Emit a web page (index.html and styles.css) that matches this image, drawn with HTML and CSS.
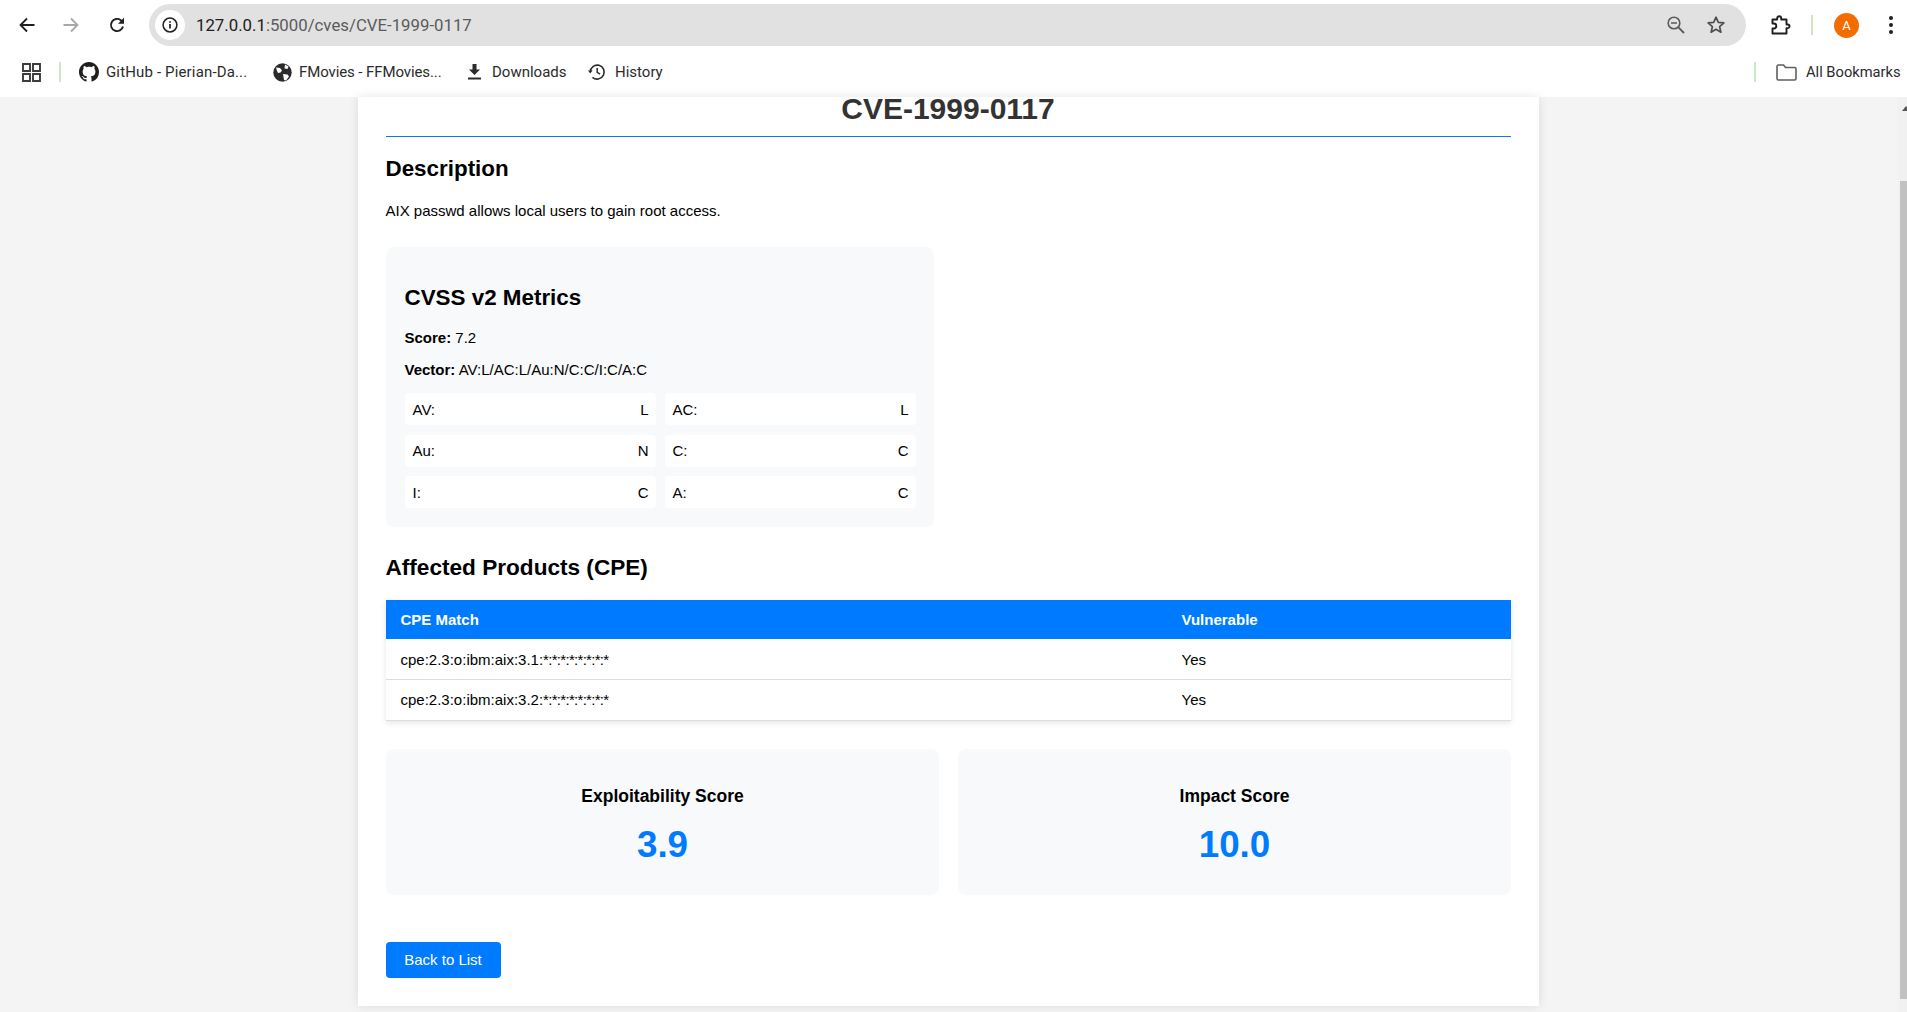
FILE: index.html
```html
<!DOCTYPE html>
<html lang="en">
<head>
  <meta charset="UTF-8" />
  <meta name="viewport" content="width=device-width, initial-scale=1.0"/>
  <title>CVE-1999-0117</title>
  <link rel="stylesheet" href="styles.css">
</head>
<body>
  <div class="browser">
    <div class="toolbar">
      <svg class="nav-icon back" viewBox="0 0 16 16"><path d="M15.500 8H1.500M8 1.500L1.500 8 8 14.500" fill="none" stroke="#1f1f1f" stroke-width="1.800"/></svg>
      <svg class="nav-icon forward" viewBox="0 0 16 16"><path d="M.5 8h14M8 1.500L14.500 8 8 14.500" fill="none" stroke="#a8a8a8" stroke-width="1.800"/></svg>
      <svg class="nav-icon reload" viewBox="0 0 16 16"><path d="M14 9.500A6.100 6.100 0 1 1 11.800 3.200L14 5.400" fill="none" stroke="#1f1f1f" stroke-width="1.900"/><path d="M15 .8v6H9z" fill="#1f1f1f"/></svg>
      <div class="omnibox">
        <span class="site-info">
          <svg width="16" height="16" viewBox="0 0 16 16"><circle cx="8" cy="8" r="6.900" fill="none" stroke="#1f1f1f" stroke-width="1.500"/><path d="M8 7v4.600M8 4.200v1.600" stroke="#1f1f1f" stroke-width="1.700"/></svg>
        </span>
        <span class="url"><span class="url-host">127.0.0.1</span>:5000/cves/CVE-1999-0117</span>
        <svg class="zoom-icon" width="20" height="20" viewBox="0 0 20 20"><circle cx="8" cy="8" r="5.800" fill="none" stroke="#5a5a5a" stroke-width="1.600"/><path d="M12.400 12.400L18 18" stroke="#5a5a5a" stroke-width="1.800"/><path d="M5 8h6" stroke="#5a5a5a" stroke-width="1.500"/></svg>
        <svg class="star-icon" width="20" height="20" viewBox="0 0 20 20"><path d="M10 2.200l2.300 5.200 5.600.5-4.300 3.700 1.300 5.600L10 14.300l-4.900 2.900 1.300-5.600L2.100 7.900l5.600-.5z" fill="none" stroke="#4f4f4f" stroke-width="1.700" stroke-linejoin="round"/></svg>
      </div>
      <svg class="puzzle" width="21" height="21" viewBox="0 0 21 21"><path d="M2.500 4.500h4.700V3.200a2 2 0 0 1 4 0v1.300h5.300v5h1.200a1.800 1.800 0 0 1 0 3.600h-1.200v5.400H2.500v-5h1.300a2.500 2.500 0 0 0 0-5H2.500z" fill="none" stroke="#1f1f1f" stroke-width="1.900" stroke-linejoin="round"/></svg>
      <span class="divider toolbar-divider"></span>
      <span class="avatar">A</span>
      <svg class="kebab" width="6" height="20" viewBox="0 0 6 20"><circle cx="3" cy="3" r="2"/><circle cx="3" cy="10" r="2"/><circle cx="3" cy="17" r="2"/></svg>
    </div>

    <div class="bookmarks">
      <svg class="apps" width="19" height="19" viewBox="0 0 19 19"><path d="M1 1h7v7H1zM11 1h7v7h-7zM1 11h7v7H1zM11 11h7v7h-7z" fill="none" stroke="#3c3c3c" stroke-width="1.900"/></svg>
      <span class="divider bookmark-divider"></span>
      <svg class="mark-icon github" width="20" height="20" viewBox="0 0 16 16"><path fill="#1f1f1f" d="M8 0C3.58 0 0 3.58 0 8c0 3.54 2.29 6.53 5.47 7.59.4.07.55-.17.55-.38 0-.19-.01-.82-.01-1.49-2.01.37-2.53-.49-2.69-.94-.09-.23-.48-.94-.82-1.13-.28-.15-.68-.52-.01-.53.63-.01 1.08.58 1.23.82.72 1.21 1.87.87 2.33.66.07-.52.28-.87.51-1.07-1.78-.2-3.64-.89-3.64-3.95 0-.87.31-1.59.82-2.15-.08-.2-.36-1.02.08-2.12 0 0 .67-.21 2.2.82.64-.18 1.32-.27 2-.27s1.36.09 2 .27c1.53-1.04 2.2-.82 2.2-.82.44 1.1.16 1.92.08 2.12.51.56.82 1.27.82 2.15 0 3.07-1.87 3.75-3.65 3.95.29.25.54.73.54 1.48 0 1.07-.01 1.93-.01 2.2 0 .21.15.46.55.38A8.01 8.01 0 0 0 16 8c0-4.42-3.58-8-8-8z"/></svg>
      <span class="mark-label github-label">GitHub - Pierian-Da...</span>
      <svg class="mark-icon globe" width="19" height="19" viewBox="0 0 19 19"><circle cx="9.500" cy="9.500" r="9.200" fill="#2b2b2b"/><path d="M3 4.500l4 .5 2 2.500-1.500 2-2.500.5-1-2zM12 1.500l3.500 2-1 2.500-3-.5zM10 11l4.500.5 1.500 2-3 4-2-.5z" fill="#fff"/></svg>
      <span class="mark-label fmovies-label">FMovies - FFMovies...</span>
      <svg class="mark-icon download" width="13" height="16" viewBox="0 0 13 16"><path d="M4.500 0h4v5.500H12L6.500 11 1 5.500h3.500zM0 13.600h13V15.400H0z" fill="#2b2b2b"/></svg>
      <span class="mark-label downloads-label">Downloads</span>
      <svg class="mark-icon history" width="18" height="18" viewBox="0 0 18 18"><path d="M2.200 9A7 7 0 1 1 4.500 14.300" fill="none" stroke="#2b2b2b" stroke-width="1.600"/><path d="M0 7.600h4.600L2.200 10.600z" fill="#2b2b2b"/><path d="M9.200 5v4.300l2.900 1.800" fill="none" stroke="#2b2b2b" stroke-width="1.500"/></svg>
      <span class="mark-label history-label">History</span>
      <span class="divider all-divider"></span>
      <svg class="folder" width="21" height="17" viewBox="0 0 21 17"><path d="M1 2.500A1.500 1.500 0 0 1 2.500 1h5l2 2.500h9A1.500 1.500 0 0 1 20 5v9.500a1.500 1.500 0 0 1-1.500 1.500h-16A1.500 1.500 0 0 1 1 14.500z" fill="none" stroke="#5f5f5f" stroke-width="1.600"/></svg>
      <span class="mark-label all-label">All Bookmarks</span>
    </div>

    <div class="viewport">
      <div class="page">
        <div class="container">
          <h1>CVE-1999-0117</h1>

          <h3 class="section-title">Description</h3>
          <p class="description">AIX passwd allows local users to gain root access.</p>

          <div class="metrics">
            <h3>CVSS v2 Metrics</h3>
            <p class="score-line"><strong>Score:</strong> 7.2</p>
            <p class="vector-line"><strong>Vector:</strong> AV:L/AC:L/Au:N/C:C/I:C/A:C</p>
            <div class="metric-grid">
              <div class="metric-item"><span>AV:</span><span>L</span></div>
              <div class="metric-item"><span>AC:</span><span>L</span></div>
              <div class="metric-item"><span>Au:</span><span>N</span></div>
              <div class="metric-item"><span>C:</span><span>C</span></div>
              <div class="metric-item"><span>I:</span><span>C</span></div>
              <div class="metric-item"><span>A:</span><span>C</span></div>
            </div>
          </div>

          <h3 class="section-title products-title">Affected Products (CPE)</h3>
          <table>
            <thead>
              <tr><th>CPE Match</th><th>Vulnerable</th></tr>
            </thead>
            <tbody>
              <tr><td>cpe:2.3:o:ibm:aix:3.1:<span class="wild">*:*:*:*:*:*:*:*</span></td><td>Yes</td></tr>
              <tr><td>cpe:2.3:o:ibm:aix:3.2:<span class="wild">*:*:*:*:*:*:*:*</span></td><td>Yes</td></tr>
            </tbody>
          </table>

          <div class="scores">
            <div class="score-card">
              <h4>Exploitability Score</h4>
              <div class="score-value">3.9</div>
            </div>
            <div class="score-card">
              <h4>Impact Score</h4>
              <div class="score-value">10.0</div>
            </div>
          </div>

          <a class="back-btn" href="#">Back to List</a>
        </div>
      </div>
      <div class="scrollbar">
        <span class="scroll-arrow"></span>
        <span class="scroll-thumb"></span>
      </div>
    </div>
  </div>
</body>
</html>
```

FILE: styles.css
```css
* {
  box-sizing: border-box;
}
html, body {
  margin: 0;
  height: 100%;
  overflow: hidden;
}
body {
  font-family: "Liberation Sans", Arial, sans-serif;
  color: #000;
}
.browser {
  display: flex;
  flex-direction: column;
  height: 1012px;
}

/* browser chrome */
.toolbar {
  display: flex;
  align-items: center;
  height: 46px;
  padding-top: 4px;
  background: white;
}
.nav-icon {
  flex: none;
  width: 16px;
  height: 16px;
}
.back {
  margin-left: 19px;
}
.forward {
  margin-left: 28px;
}
.reload {
  margin-left: 30px;
}
.omnibox {
  display: flex;
  align-items: center;
  width: 1597px;
  height: 42px;
  margin-left: 24px;
  background: #e1e1e1;
  border-radius: 21px;
}
.site-info {
  display: flex;
  align-items: center;
  justify-content: center;
  width: 30px;
  height: 30px;
  margin-left: 6px;
  background: white;
  border-radius: 50%;
}
.url {
  margin-left: 11px;
  font-family: Roboto, sans-serif;
  font-size: 16.8px;
  color: #5b5b5b;
}
.url-host {
  color: #202020;
}
.zoom-icon {
  margin-left: auto;
}
.star-icon {
  margin-left: 20px;
  margin-right: 20px;
}
.puzzle {
  margin-left: 24px;
}
.divider {
  flex: none;
  width: 2px;
  height: 20px;
  background: #cbe8c0;
}
.toolbar-divider {
  margin-left: 20px;
}
.avatar {
  display: flex;
  align-items: center;
  justify-content: center;
  width: 25px;
  height: 25px;
  margin-left: 21px;
  background: #f26c00;
  border-radius: 50%;
  color: white;
  font-family: Roboto, sans-serif;
  font-size: 13px;
}
.kebab {
  margin-left: 29px;
  fill: #1f1f1f;
}
.bookmarks {
  display: flex;
  align-items: center;
  height: 51px;
  padding-top: 1px;
  background: white;
  font-family: Roboto, sans-serif;
  font-size: 15px;
  color: #2b2b2b;
}
.apps {
  margin-left: 22px;
}
.bookmark-divider {
  margin-left: 18px;
}
.mark-icon {
  flex: none;
}
.github {
  margin-left: 18px;
}
.mark-label {
  flex: none;
  white-space: nowrap;
}
.github-label {
  width: 142px;
  margin-left: 7px;
  letter-spacing: 0.15px;
}
.globe {
  margin-left: 25px;
}
.fmovies-label {
  width: 142px;
  margin-left: 7px;
  letter-spacing: -0.1px;
}
.download {
  margin-left: 27px;
}
.downloads-label {
  width: 73px;
  margin-left: 11px;
}
.history {
  margin-left: 23px;
}
.history-label {
  margin-left: 9px;
}
.all-divider {
  margin-left: auto;
}
.folder {
  margin-left: 20px;
}
.all-label {
  width: 95px;
  margin-left: 9px;
  margin-right: 6px;
  font-size: 14.7px;
}

/* page */
.viewport {
  display: flex;
  flex: 1;
  min-height: 0;
}
.page {
  flex: 1;
  padding-right: 2px;
  background: #f4f4f4;
}
.container {
  width: 1181px;
  height: 909px;
  margin: 0 auto;
  padding: 0 28px;
  background: white;
  box-shadow: 0 0 10px rgba(0,0,0,0.1);
}
h1 {
  margin: 0;
  height: 40px;
  border-bottom: 1px solid #007bff;
  text-align: center;
  font-size: 30px;
  line-height: 24px;
  color: #333;
}
.section-title {
  margin: 17px 0 0;
  font-size: 22.4px;
  line-height: 30px;
}
.description {
  margin: 17px 0 0;
  font-size: 15px;
  line-height: 20px;
}
.metrics {
  width: 548px;
  height: 280px;
  margin-top: 26px;
  padding: 37px 18px 0 19px;
  background: #f8f9fa;
  border-radius: 8px;
}
.metrics h3 {
  margin: 0;
  font-size: 22.4px;
  line-height: 28px;
}
.score-line, .vector-line {
  margin: 0;
  font-size: 15px;
  line-height: 18px;
}
.score-line {
  margin-top: 17px;
}
.vector-line {
  margin-top: 14px;
}
.metric-grid {
  display: grid;
  grid-template-columns: 1fr 1fr;
  column-gap: 9px;
  row-gap: 9.5px;
  margin-top: 14px;
}
.metric-item {
  display: flex;
  justify-content: space-between;
  align-items: center;
  height: 32px;
  padding: 0 7px 0 8px;
  background: white;
  border-radius: 4px;
  font-size: 15px;
}
.products-title {
  margin-top: 26px;
  font-size: 22.6px;
}
table {
  width: 100%;
  margin-top: 17px;
  border-collapse: collapse;
  table-layout: fixed;
  box-shadow: 0 2px 6px rgba(0,0,0,0.1);
}
th, td {
  padding: 0 15px;
  text-align: left;
  font-size: 15px;
}
th:first-child, td:first-child {
  width: 781px;
}
th {
  height: 39px;
  background: #007bff;
  color: white;
}
td {
  height: 40.5px;
  border-bottom: 1px solid #ddd;
}
.wild {
  letter-spacing: -0.7px;
}
.scores {
  display: grid;
  grid-template-columns: 1fr 1fr;
  column-gap: 19px;
  margin-top: 28px;
}
.score-card {
  height: 146px;
  padding: 37px 0 0 1px;
  background: #f8f9fa;
  border-radius: 8px;
  text-align: center;
}
.score-card h4 {
  margin: 0;
  font-size: 17.5px;
  line-height: 20px;
}
.score-value {
  margin-top: 19px;
  font-size: 36.8px;
  line-height: 40px;
  font-weight: bold;
  color: #007bff;
}
.back-btn {
  display: inline-block;
  width: 115px;
  height: 36px;
  margin-top: 47px;
  background: #007bff;
  border-radius: 4px;
  color: white;
  font-size: 15px;
  line-height: 36px;
  text-align: center;
  text-decoration: none;
}
.scrollbar {
  flex: none;
  width: 9px;
  overflow: hidden;
  background: #f1f1f1;
}
.scroll-arrow {
  display: block;
  width: 0;
  height: 0;
  margin: 9px 0 0 4px;
  border-left: 4px solid transparent;
  border-right: 4px solid transparent;
  border-bottom: 5px solid #555;
}
.scroll-thumb {
  display: block;
  height: 818px;
  margin: 70px 0 0 2px;
  background: #c1c1c1;
}
```
